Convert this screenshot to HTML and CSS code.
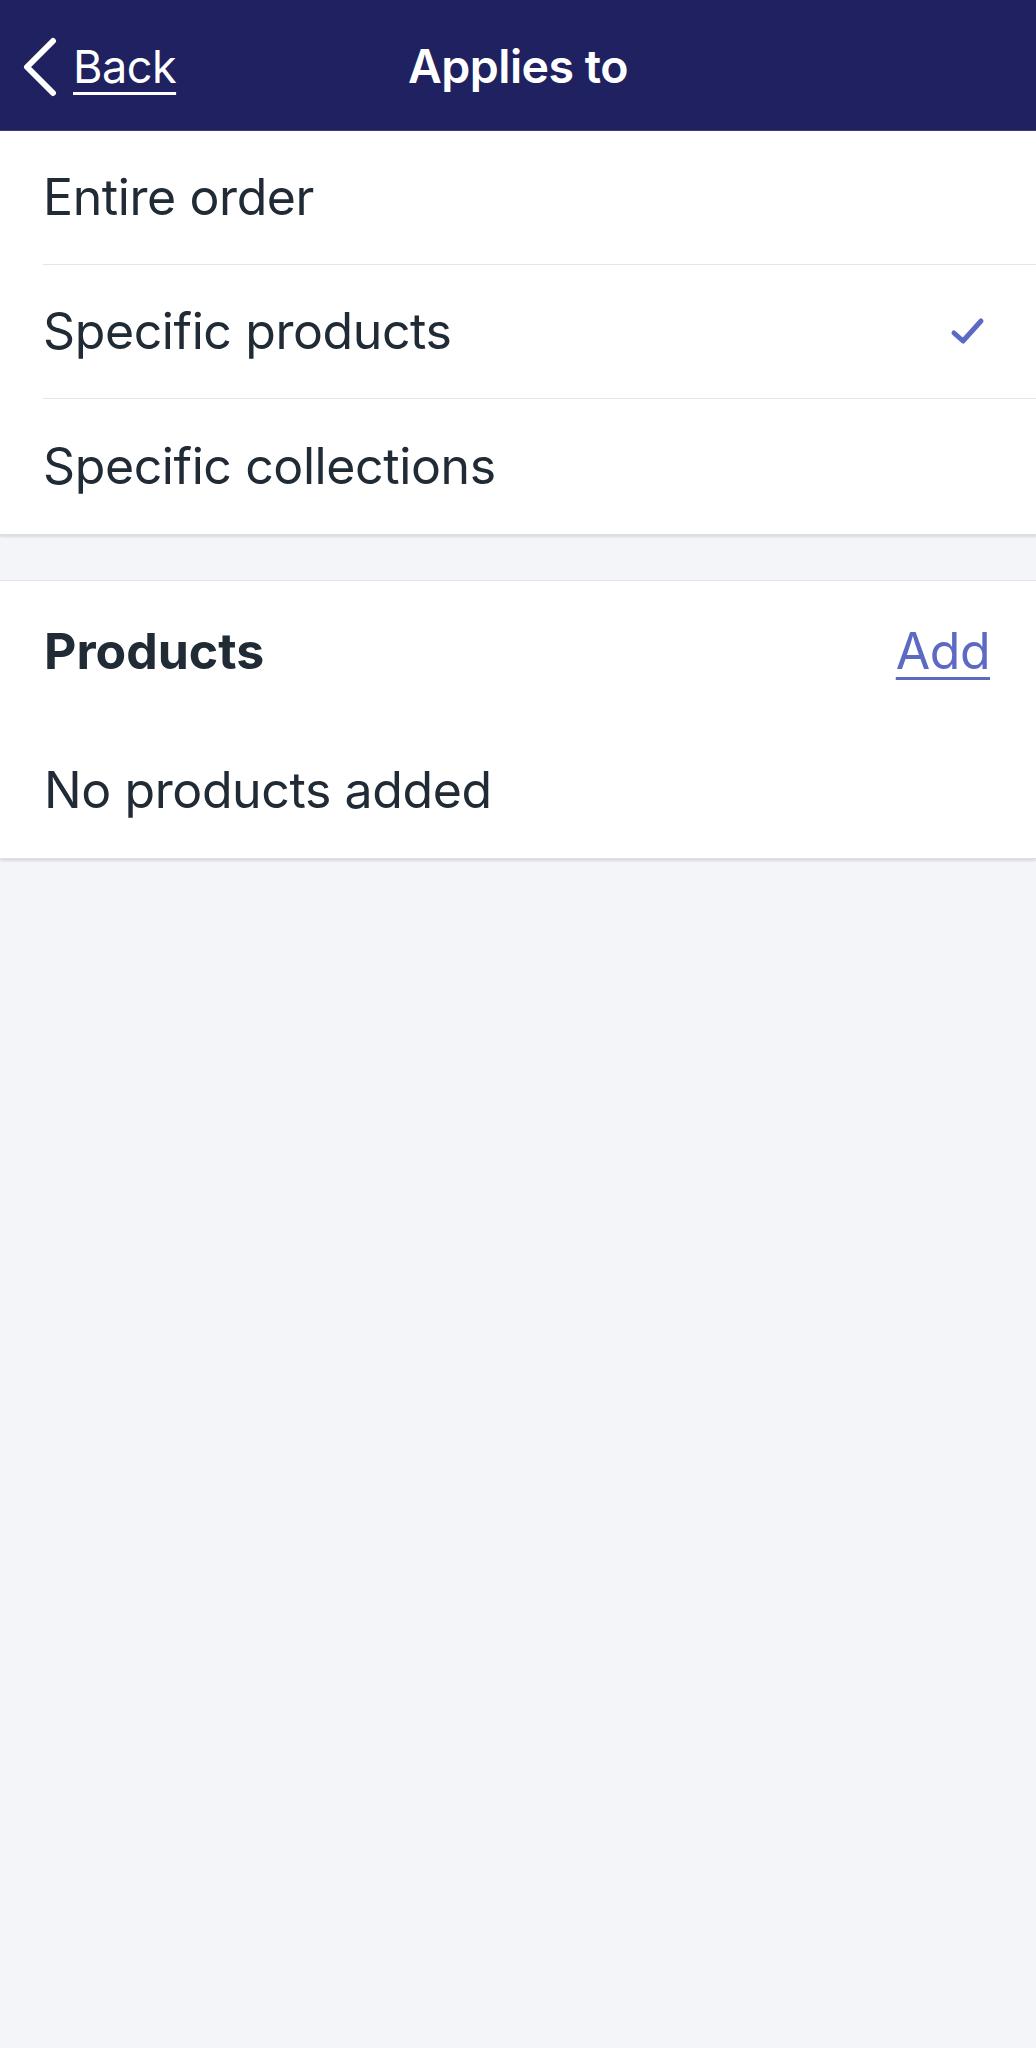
FILE: index.html
```html
<!DOCTYPE html>
<html lang="en">
<head>
<meta charset="utf-8">
<title>Applies to</title>
<link rel="stylesheet" href="styles.css">
</head>
<body>
<header class="nav">
  <a class="nav-back" href="#">
    <svg class="chev" width="38" height="60" viewBox="0 0 38 60"><path d="M32 4 L6 30 L32 56" fill="none" stroke="#fff" stroke-width="6" stroke-linecap="round" stroke-linejoin="round"/></svg>
    <span class="nav-back-text">Back</span>
  </a>
  <h1 class="nav-title">Applies to</h1>
</header>
<main>
  <section class="card">
    <div class="row"><span class="row-text">Entire order</span></div>
    <div class="row"><span class="row-text">Specific products</span>
      <svg class="check" width="40" height="34" viewBox="0 0 40 34"><path d="M6 19 L15 27 L33 7" fill="none" stroke="#5c6ac4" stroke-width="5" stroke-linecap="round" stroke-linejoin="round"/></svg>
    </div>
    <div class="row"><span class="row-text">Specific collections</span></div>
  </section>
  <section class="card card-products">
    <div class="prod-head"><h2 class="prod-title">Products</h2><a class="add" href="#">Add</a></div>
    <div class="prod-empty">No products added</div>
  </section>
</main>
</body>
</html>
```
FILE: styles.css
```css
html, body {
  margin: 0;
  padding: 0;
}
body {
  background: #f4f5f8;
  font-family: Inter, "Noto Sans", "Liberation Sans", sans-serif;
  color: #212b36;
  min-height: 2048px;
}
.nav {
  height: 130px;
  background: #1f2160;
  border-bottom: 1px solid #3a3d72;
  display: flex;
  align-items: center;
  justify-content: center;
  position: relative;
}
.nav-back {
  position: absolute;
  left: 21px;
  top: 37px;
  display: flex;
  align-items: center;
  gap: 14px;
  color: #fff;
  text-decoration: none;
}
.chev {
  display: block;
}
.nav-back-text {
  font-size: 45px;
  letter-spacing: -0.5px;
  text-decoration: underline;
  text-decoration-thickness: 3px;
  text-underline-offset: 9px;
  line-height: 60px;
}
.nav-title {
  margin: 0;
  font-size: 46.5px;
  font-weight: 600;
  color: #fff;
  letter-spacing: -0.5px;
  margin-top: 2px;
}
.card {
  background: #fff;
  box-shadow: 0 2px 2px rgba(33, 43, 54, 0.12);
  border-bottom: 1px solid #dcdfe6;
}
.row {
  height: 133px;
  margin-left: 43px;
  padding-right: 48px;
  display: flex;
  align-items: center;
  justify-content: space-between;
  border-bottom: 1px solid #e3e5ea;
}
.row:last-child {
  border-bottom: none;
  height: 135px;
}
.row-text {
  font-size: 50px;
  letter-spacing: -0.4px;
  margin-top: -2px;
}
.check {
  display: block;
  margin-top: -2px;
}
.card-products {
  margin-top: 45px;
  border-top: 1px solid #e3e5ea;
}
.prod-head {
  height: 140px;
  padding: 0 46px 0 44px;
  display: flex;
  align-items: center;
  justify-content: space-between;
}
.prod-title {
  margin: 0;
  font-size: 50px;
  font-weight: 700;
  letter-spacing: 0;
}
.add {
  font-size: 50px;
  color: #5c6ac4;
  text-decoration: underline;
  text-decoration-thickness: 3px;
  text-underline-offset: 8px;
  letter-spacing: -0.5px;
}
.prod-empty {
  height: 137px;
  padding-left: 44px;
  display: flex;
  align-items: center;
  font-size: 50px;
  letter-spacing: -0.4px;
}
```
